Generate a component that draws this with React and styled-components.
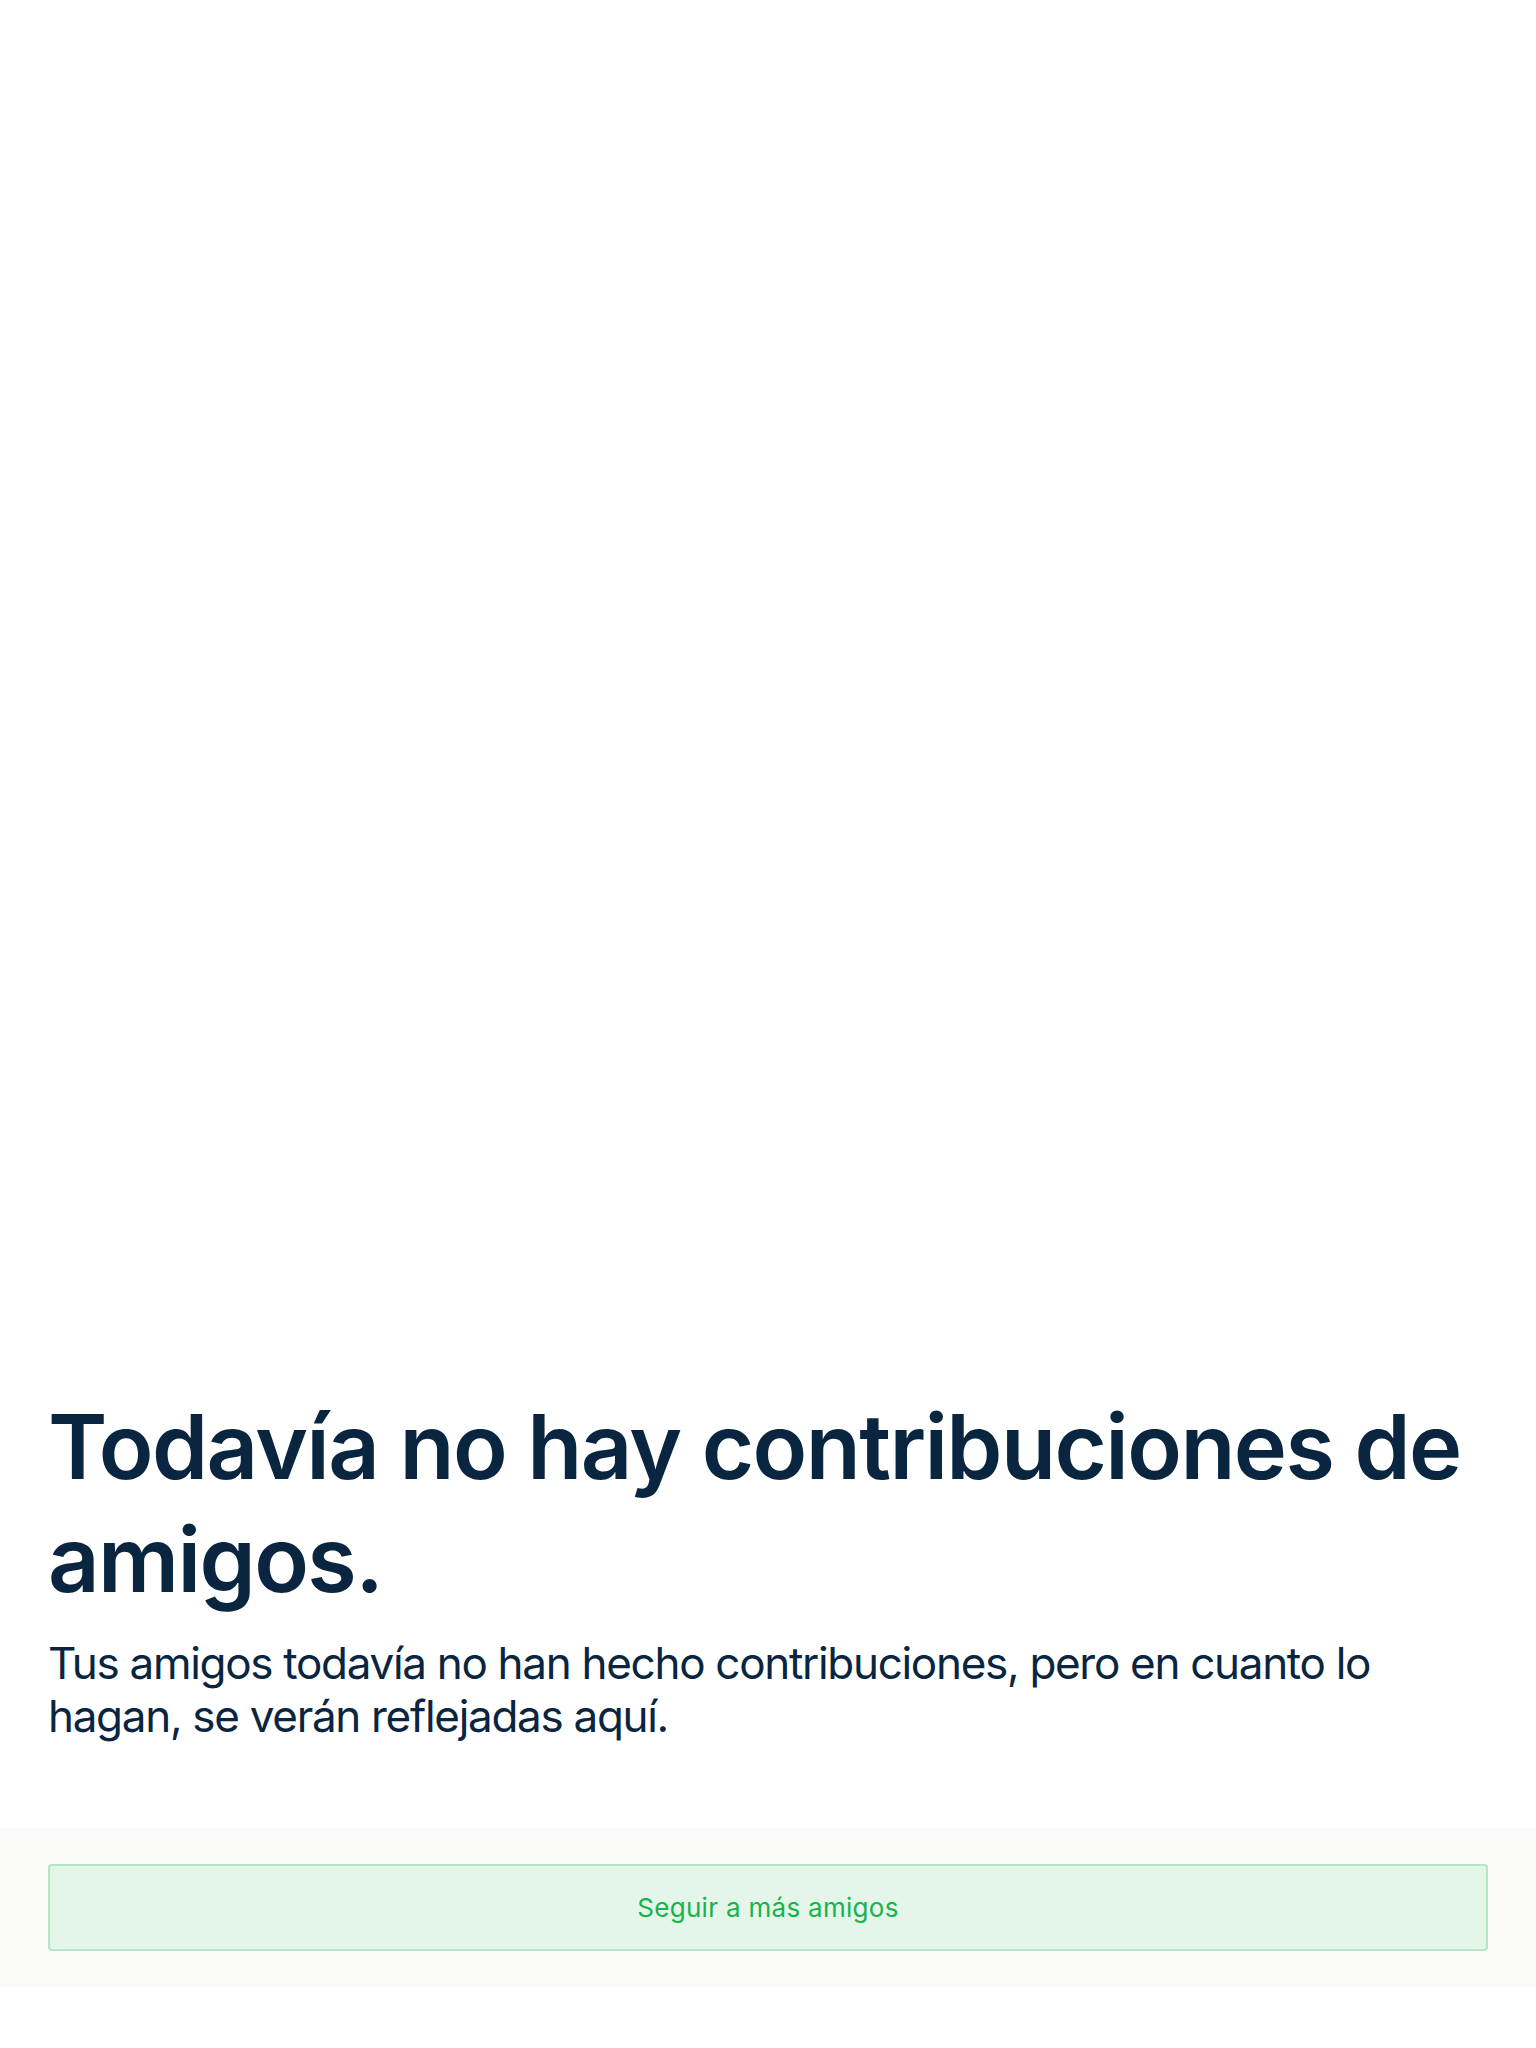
import React from 'react';
import styled, { createGlobalStyle } from 'styled-components';

const GlobalStyle = createGlobalStyle`
  html, body {
    margin: 0;
    padding: 0;
    background: #ffffff;
  }
  body {
    font-family: Inter, "Noto Sans", "Liberation Sans", sans-serif;
    -webkit-font-smoothing: antialiased;
  }
`;

const Page = styled.div`
  min-height: 100vh;
  display: flex;
  flex-direction: column;
  justify-content: flex-end;
  padding-bottom: 61px;
  box-sizing: border-box;
`;

const Content = styled.section`
  padding: 0 48px;
  margin-bottom: 85px;
`;

const Title = styled.h1`
  margin: 0 0 21px;
  font-size: 90px;
  line-height: 113px;
  font-weight: 600;
  letter-spacing: -1.6px;
  color: #0a2540;
`;

const Description = styled.p`
  margin: 0;
  font-size: 44px;
  line-height: 53px;
  font-weight: 400;
  letter-spacing: -1.3px;
  color: #0a2540;
`;

const Footer = styled.footer`
  background: #fafaf8;
  padding: 36px 48px;
`;

const ActionButton = styled.button`
  display: block;
  width: 100%;
  height: 87px;
  box-sizing: border-box;
  background: #e4f5ea;
  border: 2px solid #b7e6c6;
  border-radius: 4px;
  color: #17b44a;
  font-family: inherit;
  font-size: 26px;
  font-weight: 400;
  letter-spacing: 0.3px;
  cursor: pointer;
`;

export default function App() {
  return (
    <>
      <GlobalStyle />
      <Page>
        <Content>
          <Title>Todavía no hay contribuciones de amigos.</Title>
          <Description>
            Tus amigos todavía no han hecho contribuciones, pero en cuanto lo hagan, se verán
            reflejadas aquí.
          </Description>
        </Content>
        <Footer>
          <ActionButton>Seguir a más amigos</ActionButton>
        </Footer>
      </Page>
    </>
  );
}
